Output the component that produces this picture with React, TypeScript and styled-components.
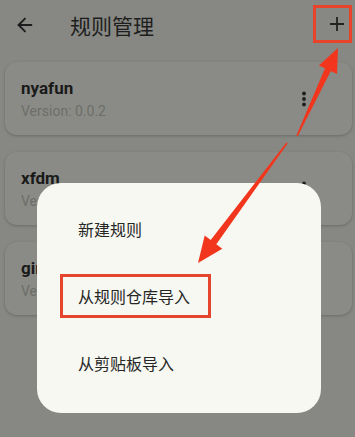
import React from 'react';
import styled, { createGlobalStyle } from 'styled-components';
import { ArrowLeft } from 'lucide-react';

const GlobalStyle = createGlobalStyle`
  html, body {
    margin: 0;
    padding: 0;
    background: #878883;
  }
  body {
    font-family: Roboto, 'Noto Sans CJK SC', 'Noto Sans', sans-serif;
  }
`;

const rules = [
  { name: 'nyafun', version: '0.0.2' },
  { name: 'xfdm', version: '0.0.1' },
  { name: 'girigiri', version: '0.0.1' },
];

const menu = ['新建规则', '从规则仓库导入', '从剪贴板导入'];

function Dots() {
  return (
    <svg width='6' height='16' viewBox='0 0 6 16'>
      <circle cx='3' cy='2.5' r='1.9' fill='#1f1f1f' />
      <circle cx='3' cy='8' r='1.9' fill='#1f1f1f' />
      <circle cx='3' cy='13.5' r='1.9' fill='#1f1f1f' />
    </svg>
  );
}

function Plus() {
  return (
    <svg width='14' height='14' viewBox='0 0 14 14'>
      <path d='M7 0v14M0 7h14' stroke='#222' strokeWidth='1.8' />
    </svg>
  );
}

function App() {
  return (
    <Screen>
      <GlobalStyle />
      <Header>
        <BackButton>
          <ArrowLeft size={22} strokeWidth={2} color='#1c1c1c' />
        </BackButton>
        <Title>规则管理</Title>
        <AddButton>
          <Plus />
        </AddButton>
      </Header>

      <List>
        {rules.map((r) => (
          <Card key={r.name}>
            <CardText>
              <RuleName>{r.name}</RuleName>
              <RuleVersion>Version: {r.version}</RuleVersion>
            </CardText>
            <MoreButton>
              <Dots />
            </MoreButton>
          </Card>
        ))}
      </List>

      <Dialog>
        {menu.map((m, i) => (
          <MenuItem key={m}>
            <MenuLabel highlight={i === 1}>{m}</MenuLabel>
          </MenuItem>
        ))}
      </Dialog>

      <Marks width='355' height='437' viewBox='0 0 355 437'>
        <polygon
          fill='#f2361d'
          points='287.6,143.5 216.3,244.2 222.3,248.7 198,263 204.7,235.5 210.7,240 286.4,142.5'
        />
        <polygon
          fill='#f2361d'
          points='297.7,136.3 330.8,71.1 337,73.9 338,48 318.8,65.5 325,68.3 296.3,135.7'
        />
      </Marks>
    </Screen>
  );
}

const Screen = styled.div`
  position: relative;
  width: 355px;
  height: 437px;
  overflow: hidden;
  background: #878883;
`;

const Header = styled.div`
  display: flex;
  align-items: center;
  height: 50px;
  padding: 0 3px 0 14px;
  box-sizing: border-box;
`;

const BackButton = styled.div`
  display: flex;
  align-items: center;
  width: 22px;
  height: 22px;
`;

const Title = styled.div`
  margin-left: 34px;
  font-size: 21px;
  color: #1e1e1e;
  font-family: 'Noto Sans CJK SC', sans-serif;
`;

const AddButton = styled.div`
  margin-left: auto;
  margin-top: -2px;
  width: 39px;
  height: 38px;
  box-sizing: border-box;
  border: 3px solid #e8442c;
  display: flex;
  align-items: center;
  justify-content: flex-end;
  padding-right: 5px;
`;

const List = styled.div`
  display: flex;
  flex-direction: column;
  gap: 17px;
  padding: 12px 3px 0 5px;
`;

const Card = styled.div`
  display: flex;
  align-items: center;
  height: 73px;
  padding-left: 16px;
  border-radius: 12px;
  background: #8a8b86;
  box-shadow: 0 1px 3px rgba(0, 0, 0, 0.22);
`;

const CardText = styled.div`
  display: flex;
  flex-direction: column;
  gap: 2px;
  flex: 1;
`;

const RuleName = styled.div`
  font-size: 17px;
  font-weight: bold;
  line-height: 22px;
  color: #1a1a1a;
`;

const RuleVersion = styled.div`
  font-size: 14px;
  line-height: 20px;
  color: #6d6e6a;
`;

const MoreButton = styled.div`
  display: flex;
  align-items: center;
  margin-right: 45px;
`;

const Dialog = styled.div`
  position: absolute;
  left: 37px;
  top: 183px;
  width: 284px;
  height: 230px;
  box-sizing: border-box;
  padding: 12px 0 17px;
  border-radius: 24px;
  background: #f6f8f1;
  display: flex;
  flex-direction: column;
`;

const MenuItem = styled.div`
  display: flex;
  align-items: center;
  height: 67px;
  padding-left: 41px;
`;

const MenuLabel = styled.span<{ highlight?: boolean }>`
  font-family: 'Noto Sans CJK SC', sans-serif;
  font-size: 16px;
  line-height: 20px;
  color: #262626;
  ${(p) =>
    p.highlight &&
    `
    border: 3px solid #e5452d;
    padding: 9px 18px 9px 15px;
    margin-left: -18px;
  `}
`;

const Marks = styled.svg`
  position: absolute;
  left: 0;
  top: 0;
  pointer-events: none;
`;

export default App;
